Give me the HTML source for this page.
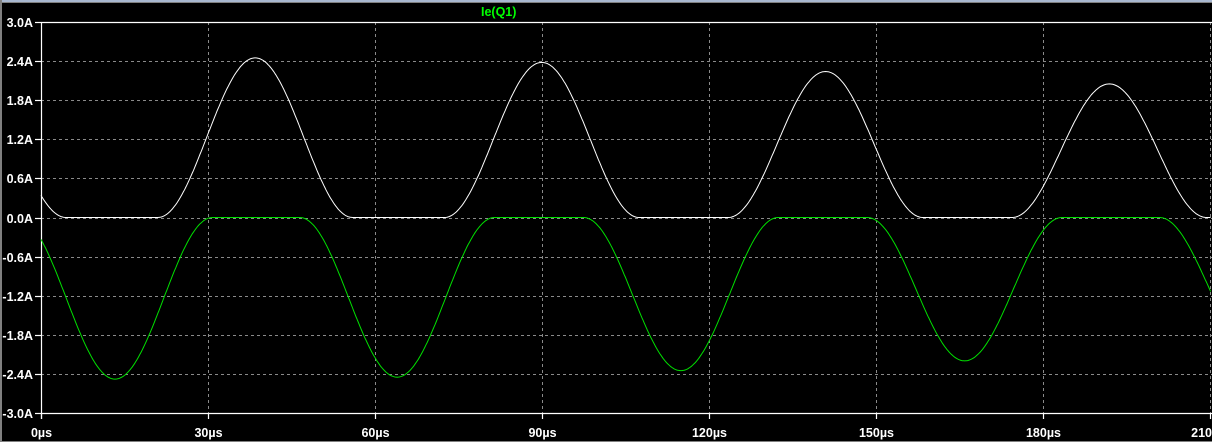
<!DOCTYPE html>
<html><head><meta charset="utf-8"><style>
html,body{margin:0;padding:0;background:#000;width:1212px;height:442px;overflow:hidden}
svg{display:block}
text{font-family:"Liberation Sans",sans-serif;font-weight:bold;font-size:12.5px;fill:#fff}
</style></head><body>
<svg id="s" width="1212" height="442" viewBox="0 0 1212 442" xmlns="http://www.w3.org/2000/svg">
<rect x="0" y="0" width="1212" height="442" fill="#000"/>
<rect x="0" y="0" width="1212" height="2" fill="#a8b8d0"/>
<rect x="0" y="2" width="1212" height="1" fill="#808080"/>
<rect x="0" y="0" width="2" height="442" fill="#808080"/>
<rect x="0" y="441" width="1212" height="1" fill="#808080"/>
<g id="grid" stroke="#8a8a8a" stroke-width="1" stroke-dasharray="3,3"></g>
<g id="axes" stroke="#fff" stroke-width="1.2"></g>
<g id="labels"></g>
<text x="481" y="16" style="fill:#00ff00;font-size:12.5px">Ie(Q1)</text>
<polyline id="w" fill="none" stroke="#fff" stroke-width="1"/>
<polyline id="g" fill="none" stroke="#00e000" stroke-width="1"/>
</svg>
<script>
var NS="http://www.w3.org/2000/svg";
var X0=41,XS=(1209.5-41)/210,Y0=217.5,YS=(413-22)/6;
function X(t){return X0+t*XS}function Y(a){return Y0-a*YS}
function el(p,n,a,txt){var e=document.createElementNS(NS,n);for(var k in a)e.setAttribute(k,a[k]);if(txt)e.textContent=txt;document.getElementById(p).appendChild(e);}
for(var i=1;i<=7;i++){var x=Math.round(X(i*30))+0.5;el("grid","line",{x1:x,y1:22,x2:x,y2:413});}
var ys=["3.0A","2.4A","1.8A","1.2A","0.6A","0.0A","-0.6A","-1.2A","-1.8A","-2.4A","-3.0A"];
for(var j=0;j<11;j++){var y=Math.round(22+j*YS*0.6)+0.5;
 if(j>0&&j<10)el("grid","line",{x1:41,y1:y,x2:1212,y2:y});
 el("axes","line",{x1:35,y1:y,x2:41,y2:y});
 el("labels","text",{x:33,y:y+4.5,"text-anchor":"end"},ys[j]);}
el("axes","line",{x1:41.5,y1:22,x2:41.5,y2:419});
el("axes","line",{x1:41,y1:22.5,x2:1212,y2:22.5});
el("axes","line",{x1:41,y1:413.5,x2:1212,y2:413.5});
var xl=["0µs","30µs","60µs","90µs","120µs","150µs","180µs","210"];
for(var i=0;i<8;i++){var x=Math.round(X(i*30))+0.5;el("axes","line",{x1:x,y1:413,x2:x,y2:419});
 el("labels","text",{x:(i==7?1212:x),y:437,"text-anchor":(i==7?"end":"middle")},xl[i]);}
var wc=[[-13,2.2],[38.5,2.45],[90,2.38],[141,2.24],[192,2.05],[243,1.9]];
var gc=[[13.3,2.48],[64,2.45],[115,2.35],[166,2.2],[218.5,2.1]];
function f(t,cs){var v=0;for(var k=0;k<cs.length;k++){var d=t-cs[k][0];if(Math.abs(d)<17.5)v+=cs[k][1]*(1+Math.cos(Math.PI*d/17.5))/2;}return v;}
var pw=[],pg=[];
for(var t=0;t<=210.2;t+=0.2){pw.push(X(t).toFixed(1)+","+Y(f(t,wc)).toFixed(1));pg.push(X(t).toFixed(1)+","+Y(-f(t,gc)).toFixed(1));}
document.getElementById("w").setAttribute("points",pw.join(" "));
document.getElementById("g").setAttribute("points",pg.join(" "));
</script>
</body></html>
